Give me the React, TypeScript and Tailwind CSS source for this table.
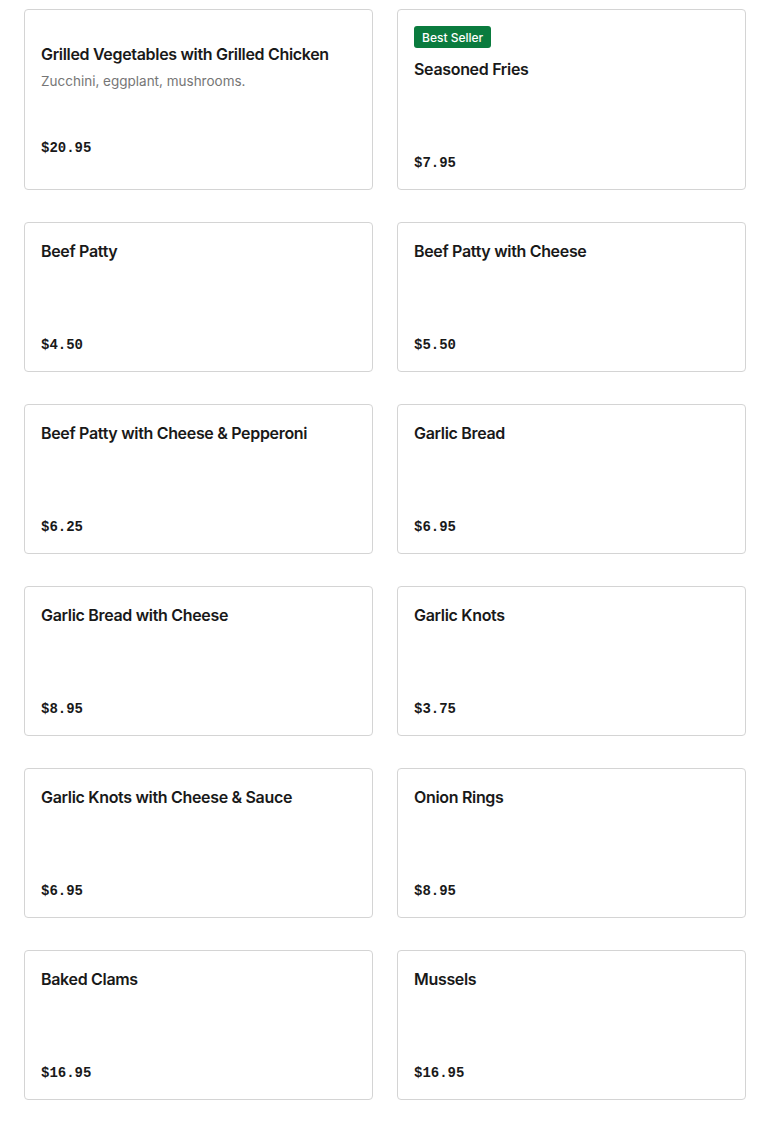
import React from 'react';

type Item = {
  name: string;
  price: string;
  description?: string;
  badge?: string;
  spacer?: boolean;
};

const items: Item[] = [
  { name: 'Grilled Vegetables with Grilled Chicken', description: 'Zucchini, eggplant, mushrooms.', price: '$20.95', spacer: true },
  { name: 'Seasoned Fries', price: '$7.95', badge: 'Best Seller' },
  { name: 'Beef Patty', price: '$4.50' },
  { name: 'Beef Patty with Cheese', price: '$5.50' },
  { name: 'Beef Patty with Cheese & Pepperoni', price: '$6.25' },
  { name: 'Garlic Bread', price: '$6.95' },
  { name: 'Garlic Bread with Cheese', price: '$8.95' },
  { name: 'Garlic Knots', price: '$3.75' },
  { name: 'Garlic Knots with Cheese & Sauce', price: '$6.95' },
  { name: 'Onion Rings', price: '$8.95' },
  { name: 'Baked Clams', price: '$16.95' },
  { name: 'Mussels', price: '$16.95' },
];

const MenuCard: React.FC<{ item: Item }> = ({ item }) => {
  return (
    <div className="border border-[#d4d4d4] rounded-[4px] px-4 pt-4 pb-[14px] bg-white">
      {item.spacer && <div className="h-4" />}
      {item.badge && (
        <div className="flex mb-[9px]">
          <span className="flex items-center h-[22px] px-2 pt-px rounded-[3px] bg-[#0a7b3e] text-white text-[12px] font-medium leading-none">
            {item.badge}
          </span>
        </div>
      )}
      <div className="min-h-[118px] flex flex-col justify-between">
        <div>
          <h3 className="text-[16px] leading-6 font-semibold tracking-[-0.02em] text-[#191919]">{item.name}</h3>
          {item.description && (
            <p className="mt-[5px] text-[13.5px] leading-5 text-[#767676]">{item.description}</p>
          )}
        </div>
        <p className="font-['Liberation_Mono',monospace] text-[14px] leading-6 font-bold text-[#191919]">
          {item.price}
        </p>
      </div>
    </div>
  );
};

const App: React.FC = () => {
  return (
    <div className="min-h-screen bg-white font-['Inter',sans-serif]">
      <div className="px-6 pt-[9px] pb-6 grid grid-cols-2 gap-x-6 gap-y-8">
        {items.map((item) => (
          <MenuCard key={item.name} item={item} />
        ))}
      </div>
    </div>
  );
};

export default App;
